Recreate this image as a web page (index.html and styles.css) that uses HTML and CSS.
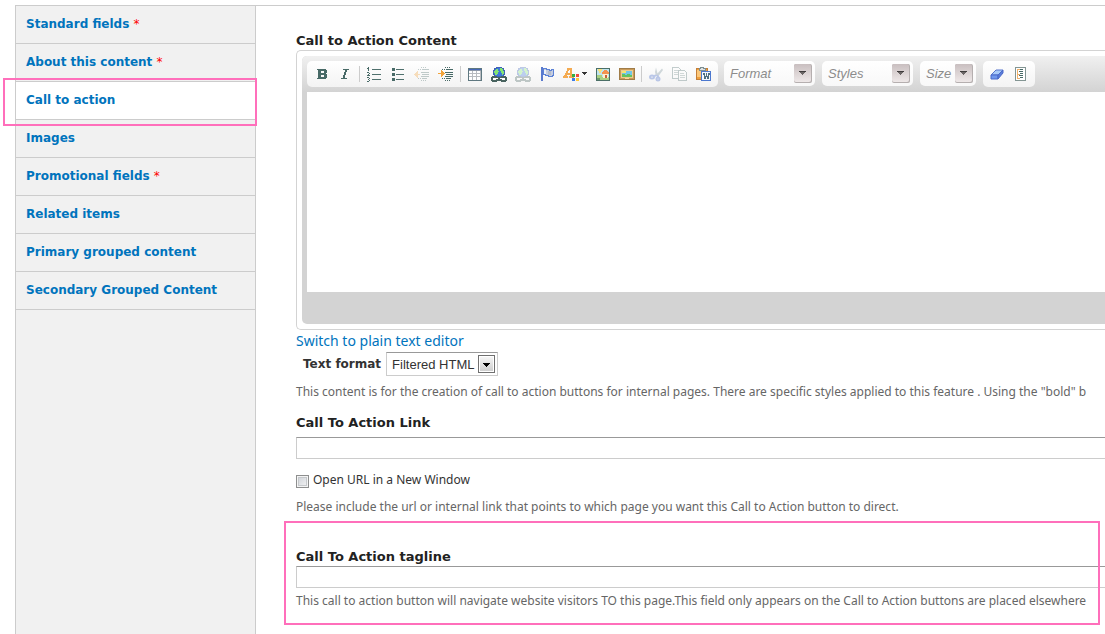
FILE: index.html
```html
<!DOCTYPE html>
<html lang="en">
<head>
<meta charset="utf-8">
<title>Edit content: Call to action</title>
<link rel="stylesheet" href="styles.css">
</head>
<body>
<div class="vertical-tabs">
  <nav class="tabs" aria-label="Field groups">
    <ul class="tab-list">
      <li class="tab"><a href="#standard">Standard fields <span class="required">*</span></a></li>
      <li class="tab"><a href="#about">About this content <span class="required">*</span></a></li>
      <li class="tab tab-active"><a href="#cta" aria-current="true">Call to action</a></li>
      <li class="tab"><a href="#images">Images</a></li>
      <li class="tab"><a href="#promo">Promotional fields <span class="required">*</span></a></li>
      <li class="tab"><a href="#related">Related items</a></li>
      <li class="tab"><a href="#primary">Primary grouped content</a></li>
      <li class="tab"><a href="#secondary">Secondary Grouped Content</a></li>
    </ul>
  </nav>

  <main class="pane" id="cta">
    <section class="field-body">
      <label class="heading" for="content">Call to Action Content</label>
      <div class="editor">
        <div class="editor-inner">
          <div class="toolbar">
            <div class="group">
              <button type="button" title="Bold"><svg viewBox="0 0 16 16"><path fill="#486a67" fill-rule="evenodd" d="M4 3h9v1h1v3h-1v1h1v4h-1v1H4v-1h1V4H4zM8 5v2h3V5zM8 9v2h3V9z"/></svg></button>
              <button type="button" title="Italic"><svg viewBox="0 0 16 16"><path fill="#486a67" d="M6 3h6v1h-2v2H9v3H8v3h2v1H4v-1h2V9h1V6h1V4H6z"/></svg></button>
              <span class="separator"></span>
              <button type="button" title="Numbered list"><svg viewBox="0 0 16 16"><path stroke="#4f706d" d="M6 3.500h9M6 8.500h9M6 13.500h9"/><path fill="#486a67" d="M2 1h1v4H2zM1 2h1v1H1zM1 6h2v1H1zM3 7h1v1H3zM2 8h1v1H2zM1 9h3v1H1zM1 11h2v1H1zM3 12h1v1H3zM2 13h1v1H2zM3 14h1v1H3zM1 15h2v1H1z"/></svg></button>
              <button type="button" title="Bulleted list"><svg viewBox="0 0 16 16"><path stroke="#4f706d" d="M6 3.500h8M6 8.500h8M6 13.500h8"/><path fill="#486a67" d="M2 2h3v3H2zM2 7h3v3H2zM2 12h3v3H2z"/></svg></button>
              <button type="button" title="Decrease indent" disabled><svg class="dim" viewBox="0 0 16 16"><path stroke="#486a67" d="M8 3.500h7M7 6.500h8M8 8.500h7M7 10.500h8M8 12.500h5"/><path stroke="#486a67" stroke-dasharray="1 1" d="M4 3.500h3M4 12.500h3M7 1.500h6M7 14.500h6"/><path fill="#f2a33a" d="M0 8h1V7h1V6h1V5h1v3h2v1H4v3H3v-1H2v-1H1V9H0z"/></svg></button>
              <button type="button" title="Increase indent"><svg viewBox="0 0 16 16"><path stroke="#486a67" d="M8 3.500h7M7 6.500h8M8 8.500h7M7 10.500h8M8 12.500h5"/><path stroke="#486a67" stroke-dasharray="1 1" d="M4 3.500h3M4 12.500h3M7 1.500h6M7 14.500h6"/><path fill="#f2a33a" d="M0 7h3V4h1v1h1v1h1v1h1v1H6v1H5v1H4v1H3V8H0z"/></svg></button>
              <span class="separator"></span>
              <button type="button" title="Table"><svg viewBox="0 0 16 16"><path fill="#b9bcc0" stroke="#5f7880" d="M1.500 2.500h13v12h-13z"/><path stroke="#4568b8" d="M2 3.500h12"/><path stroke="#8c97a8" d="M2 4.500h12"/><path fill="#fff" d="M2 5h3v2H2zM6 5h3v2H6zM10 5h3v2h-3zM2 8h3v2H2zM6 8h3v2H6zM10 8h3v2h-3zM2 11h3v3H2zM6 11h3v3H6zM10 11h3v3h-3z"/></svg></button>
              <button type="button" title="Link"><svg viewBox="0 0 16 16"><use href="#globe-link"/></svg></button>
              <button type="button" title="Unlink" disabled><svg class="dim" viewBox="0 0 16 16"><use href="#globe-link"/></svg></button>
              <button type="button" title="Anchor"><svg viewBox="0 0 16 16"><path fill="#5a7ace" d="M2 1h2v14H2z"/><path fill="#c5cde0" stroke="#5c82d6" d="M4.500 2.500h3v1h3v1h2v-1h2v6h-1v1h-4v-1h-3v-1h-2z"/><path fill="#eef1f6" d="M5 4h2v4H5z"/><path fill="#b4bccb" d="M9 5h3v4H9z"/></svg></button>
              <button type="button" title="Text color" class="wide"><svg viewBox="0 0 25 16"><path fill="#f4ab52" fill-rule="evenodd" d="M4 2h4l1 1v4l1 3h1v2H6v-2h1V9H4v1h1v2H0v-2h1l2-4 1-2zM5 5v2h2V4z"/><path fill="#36ad47" d="M9 8h3v3H9z"/><path fill="#f04a42" d="M13 8h3v3h-3z"/><path fill="#3c7ce8" d="M9 12h3v3H9z"/><path fill="#ffc83b" d="M13 12h3v3h-3z"/><path fill="#333" d="M19 6h5v1h-1v1h-1v1h-1V8h-1V7h-1z"/></svg></button>
              <button type="button" title="Image"><svg viewBox="0 0 16 16"><path fill="#bfe4ef" stroke="#4b6f67" d="M1.500 2.500h13v12h-13z"/><path fill="#f9e27c" d="M3 3h4v2H6v2H4V5H3z"/><path fill="#a9d183" d="M2 9h5v2h7v3H2z"/><path fill="#6d9a6d" d="M2 12h3v2H2z"/><path fill="#fff0cf" d="M8 8h5v4H8z"/><path fill="#f3924f" d="M7 7l2-3h3l2 3v1H7z"/><path fill="#c3633a" d="M10 9h2v3h-2z"/></svg></button>
              <button type="button" title="Insert media"><svg viewBox="0 0 16 16"><path fill="#c99a58" stroke="#a07c48" d="M.5 2.500h15v11H.5z"/><path fill="#edcb8e" d="M2 4h12v8H2z"/><path fill="#72c6e9" d="M3 5h10v6H3z"/><path fill="#f5e371" d="M3 5h4v2H3z"/><path fill="#62c25f" d="M3 8h3v1h2V8h3v1h2v2H3z"/><path fill="#f7d992" d="M6 12h4v1H6z"/></svg></button>
              <span class="separator"></span>
              <button type="button" title="Cut" disabled><svg class="dim smooth" viewBox="0 0 16 16"><path fill="#768f98" d="M8 1.500l1.500 6L14 2.500l1 1.500-4.500 6H8L7 6z"/><path fill="none" stroke="#3b63c7" stroke-width="2" d="M8 9l-2 1.500M9 9l1.500 2.500"/><ellipse cx="4" cy="11" rx="2" ry="1.500" fill="none" stroke="#3b63c7" stroke-width="2"/><ellipse cx="10" cy="13" rx="1.500" ry="1.500" fill="none" stroke="#3b63c7" stroke-width="2"/></svg></button>
              <button type="button" title="Copy" disabled><svg class="dim" viewBox="0 0 16 16"><path fill="#fff" stroke="#4d6e6d" d="M.5 1.500h6l2 2v9h-8z"/><path fill="#fff" stroke="#4d6e6d" d="M6.500 4.500h6l2 2v8h-8z"/><path stroke="#7c9492" d="M2 4.500h4M2 6.500h4M2 8.500h4M8 7.500h4M8 9.500h5M8 11.500h5"/></svg></button>
              <button type="button" title="Paste from Word"><svg viewBox="0 0 16 16"><path fill="#ee9f3c" stroke="#c47f38" d="M.5 2.500h11v11H.5z"/><path fill="#fbc77a" d="M1 4h4v7H1z"/><path fill="#dfe2e3" stroke="#7d8f93" d="M3.500 2.500h1v-1h3v1h2v2h-6z"/><path fill="#f3f7fc" stroke="#4c78cf" d="M5.500 5.500h9v9h-9z"/><path fill="#4f6f80" d="M7 7h2v3h1V7h1v3h1V7h2v2h-1v4h-2v-2h-1v2H8V9H7z"/></svg></button>
            </div>
            <span class="combo combo-wide"><select aria-label="Format"><option>Format</option></select><svg viewBox="0 0 18 19"><use href="#combo-arrow"/></svg></span>
            <span class="combo combo-wide"><select aria-label="Styles"><option>Styles</option></select><svg viewBox="0 0 18 19"><use href="#combo-arrow"/></svg></span>
            <span class="combo combo-small"><select aria-label="Size"><option>Size</option></select><svg viewBox="0 0 18 19"><use href="#combo-arrow"/></svg></span>
            <div class="group">
              <button type="button" title="Remove format"><svg class="smooth" viewBox="0 0 16 16"><path fill="#a9caf8" stroke="#5674cc" d="M2 9l5-5h7l-5 5z"/><path fill="#6f97ec" stroke="#4a69c9" d="M2 9h7v4H2z"/><path fill="#5a7cd8" stroke="#4a69c9" d="M9 9l5-5v3l-5 6z"/></svg></button>
              <button type="button" title="Show blocks"><svg viewBox="0 0 16 16"><path fill="#fff" stroke="#839593" d="M2.500 1.500h10v13h-10z"/><path stroke="#efb06a" d="M4.500 3v10M5 3.500h2M5 8.500h2M5 12.500h2"/><path stroke="#486a67" d="M7 3.500h3M6 5.500h4M7 7.500h3M6 9.500h4M7 11.500h3"/></svg></button>
            </div>
          </div>
          <textarea id="content" class="editor-area" spellcheck="false"></textarea>
          <div class="editor-footer"></div>
        </div>
      </div>
      <a class="switch" href="#plain">Switch to plain text editor</a>
      <div class="format-row">
        <label for="format">Text format</label>
        <span class="format-select"><select id="format"><option>Filtered HTML</option></select><svg viewBox="0 0 17 18"><defs><linearGradient id="native" x1="0" y1="0" x2="0" y2="1"><stop offset="0" stop-color="#f5f5f5"/><stop offset="1" stop-color="#cfcfcf"/></linearGradient></defs><path fill="#fff" stroke="#707070" d="M.5.5h16v17H.5z"/><path fill="url(#native)" d="M2 2h13v14H2z"/><path d="M5 8h7v1h-1v1h-1v1H9v1H8v-1H7v-1H6V9H5z"/></svg></span>
      </div>
      <p class="description">This content is for the creation of call to action buttons for internal pages. There are specific styles applied to this feature . Using the "bold" b</p>
    </section>

    <section class="field-link">
      <label class="heading" for="link">Call To Action Link</label>
      <input class="text link-input" id="link" type="text">
      <div class="check-row"><input id="new-window" type="checkbox"><label for="new-window">Open URL in a New Window</label></div>
      <p class="description">Please include the url or internal link that points to which page you want this Call to Action button to direct.</p>
    </section>

    <section class="field-tagline">
      <label class="heading" for="tagline">Call To Action tagline</label>
      <input class="text" id="tagline" type="text">
      <p class="description">This call to action button will navigate website visitors TO this page.This field only appears on the Call to Action buttons are placed elsewhere</p>
    </section>
  </main>
</div>

<svg class="symbols" aria-hidden="true">
  <symbol id="globe-link" viewBox="0 0 16 16">
    <path fill="#3e78d8" stroke="#3f62b8" d="M5.500 1.500h5v1h2v2h1v4h-1v2h-9v-2h-1v-4h1v-2h2z"/>
    <path fill="#83e673" d="M4 4h1V3h2v2h1v1H7v2H6v1H4V7H3V5h1zM9 2h2v1h1v2h1v3h-1v1h-1V7h-1V5H9z"/>
    <path fill="#fff" d="M2 11h12v3H2z"/>
    <path fill="#48635f" fill-rule="evenodd" d="M1 10h5v1h4v-1h5v1h1v4h-1v1h-5v-1H6v1H1v-1H0v-4h1zM2 12v2h3v-1h2v-1zM9 12v1h2v1h3v-2z"/>
  </symbol>
  <linearGradient id="combo-face" x1="0" y1="0" x2="0" y2="1"><stop offset="0" stop-color="#c9bfc0"/><stop offset="1" stop-color="#eee8e8"/></linearGradient>
  <symbol id="combo-arrow" viewBox="0 0 18 19">
    <rect width="18" height="19" rx="2" fill="#b5afaf"/>
    <rect width="17" height="18" rx="2" fill="url(#combo-face)"/>
    <path fill="#6b6666" d="M5 7h7v1h-1v1h-1v1H9v1H8v-1H7V9H6V8H5z"/>
    <path fill="#3f3c3c" d="M5 7h7v1H5z"/>
  </symbol>
</svg>
</body>
</html>
```
FILE: styles.css
```css
* { box-sizing: border-box; }

body {
  margin: 0;
  padding: 5px 0 0 15px;
  height: 100vh;
  overflow: hidden;
  background: #fff;
  color: #333;
  font-family: "Noto Sans", "Open Sans", sans-serif;
  font-size: 12px;
  line-height: 16px;
}

.vertical-tabs {
  display: grid;
  grid-template-columns: 241px minmax(0, 1fr);
  min-height: 100%;
  border-top: 1px solid #ccc;
}

.tabs {
  border: solid #ccc;
  border-width: 0 1px;
  background: #f1f1f1;
}

.tab-list {
  margin: 0;
  padding: 0;
  list-style: none;
}

.tab {
  position: relative;
  border-bottom: 1px solid #ccc;
}

.tab a {
  display: block;
  padding: 10px 10px 11px;
  color: #0074bd;
  font: bold 12px/16px "DejaVu Sans", sans-serif;
  text-decoration: none;
}

.required {
  color: #f00;
  font-weight: normal;
}

.tab-active { background: #fff; }

.tab-active::after,
.field-tagline::after {
  content: "";
  position: absolute;
  border: 2px solid #ff6fbb;
  pointer-events: none;
}

.tab-active::after { inset: -4px -2px -7px -13px; }

.pane {
  padding: 26px 0 0 40px;
  white-space: nowrap;
}

.heading {
  display: block;
  color: #222;
  font: bold 13px/18px "DejaVu Sans", sans-serif;
}

.description {
  margin: 0;
  color: #666;
}

.editor {
  border: solid #d3d3d3;
  border-width: 1px 0 1px 1px;
  border-radius: 5px 0 0 5px;
  padding: 5px 0 5px 5px;
}

.editor-inner {
  overflow: hidden;
  border-radius: 5px 0 0 5px;
  background: #d3d3d3;
  padding-left: 5px;
}

.toolbar {
  display: flex;
  align-items: flex-start;
  gap: 6px;
  height: 36px;
  margin-left: -5px;
  padding: 5px 0 0 5px;
  background: linear-gradient(#f0f0f0, #d3d3d3);
}

.group {
  display: flex;
  align-items: center;
  flex: none;
  height: 26px;
  padding: 0 2px;
  border-radius: 5px;
  background: linear-gradient(#fff, #f3f3f3);
}

.group button {
  display: flex;
  align-items: center;
  justify-content: center;
  width: 24px;
  height: 24px;
  padding: 0;
  border: 0;
  background: none;
}

.group button.wide { width: 32px; }

.group svg {
  width: 16px;
  height: 16px;
  fill: none;
  shape-rendering: crispEdges;
}

.group .wide svg { width: 25px; }
.group svg.smooth { shape-rendering: auto; }
.group svg.dim { opacity: .32; }

.separator {
  width: 1px;
  height: 16px;
  margin: 0 2px;
  background: #ccc;
}

.combo {
  position: relative;
  flex: none;
  height: 25px;
  margin-right: 1px;
  border-radius: 5px;
  background: linear-gradient(#fff, #f8f8f8);
}

.combo-wide { width: 91px; }
.combo-small { width: 56px; }

.combo select {
  width: 100%;
  height: 25px;
  padding: 0 6px;
  border: 0;
  appearance: none;
  background: none;
  color: #8c8c8c;
  font: italic 13px "Liberation Sans", Arial, sans-serif;
}

.combo svg {
  position: absolute;
  top: 3px;
  right: 3px;
  width: 18px;
  height: 19px;
  pointer-events: none;
}

.editor-area {
  display: block;
  width: 100%;
  height: 200px;
  padding: 8px;
  border: 0;
  outline: 0;
  resize: none;
  background: #fff;
}

.editor-footer { height: 32px; }

.switch {
  display: block;
  color: #0074bd;
  font-size: 14px;
  line-height: 22px;
  text-decoration: none;
}

.format-row {
  display: flex;
  align-items: center;
  gap: 5px;
  padding-left: 7px;
  margin-bottom: 8px;
}

.format-row label { font: bold 12px/24px "DejaVu Sans", sans-serif; }

.format-select {
  position: relative;
  width: 112px;
  height: 24px;
}

.format-select select {
  width: 100%;
  height: 24px;
  padding: 0 5px;
  border: 1px solid #ccc;
  border-top-color: #999;
  border-radius: 0;
  appearance: none;
  background: #fff;
  color: #333;
  font: 13px "Liberation Sans", Arial, sans-serif;
}

.format-select svg {
  position: absolute;
  top: 3px;
  right: 3px;
  width: 17px;
  height: 18px;
  shape-rendering: crispEdges;
  pointer-events: none;
}

.field-link { margin-top: 14px; }

.text {
  display: block;
  width: 100%;
  height: 22px;
  padding: 2px;
  border: 1px solid #ccc;
  border-top-color: #999;
  border-right: 0;
  background: #fff;
}

.link-input { margin-top: 5px; }

.check-row {
  display: flex;
  align-items: center;
  gap: 4px;
  margin: 13px 0 11px;
}

.check-row input {
  width: 13px;
  height: 13px;
  margin: 3px 0 0;
  border: 1px solid #8e8f8f;
  appearance: none;
  background: linear-gradient(135deg, #cbcfd5, #f6f6f6);
  box-shadow: inset 0 0 0 1px #f4f4f4, inset 0 0 0 2px #c6c9cc;
}

.field-tagline {
  position: relative;
  margin-top: 33px;
}

.field-tagline .text { margin-bottom: 5px; }

.field-tagline::after { inset: -27px 5px -16px -12px; }

.symbols {
  position: absolute;
  width: 0;
  height: 0;
}
```
